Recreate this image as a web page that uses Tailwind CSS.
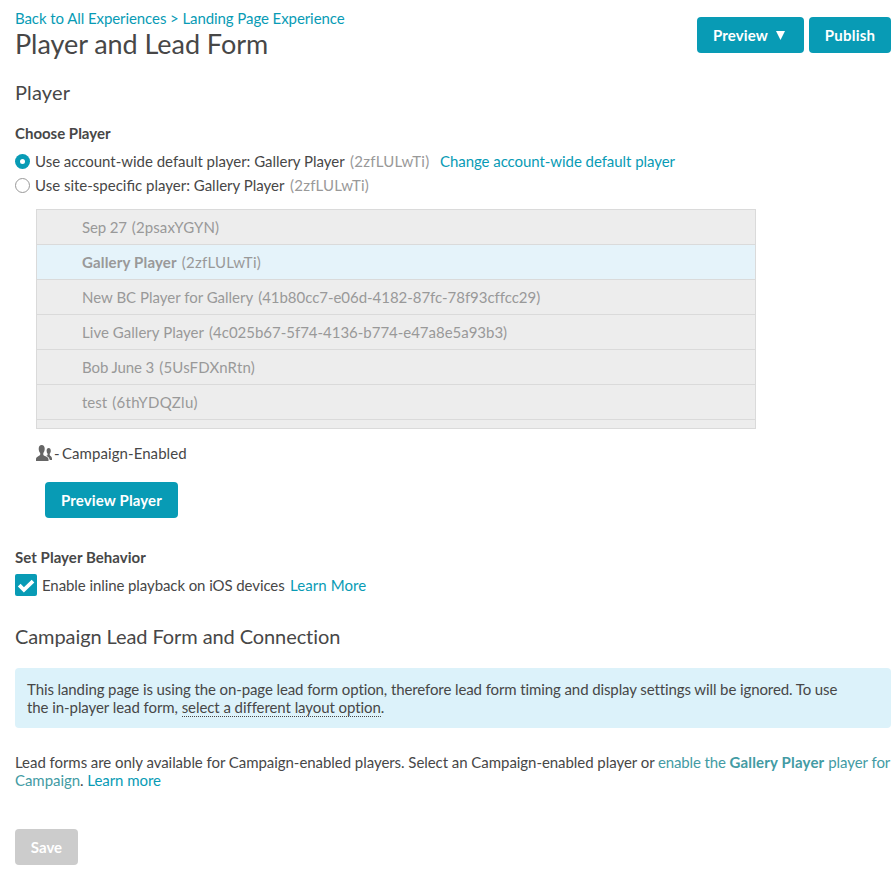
<!DOCTYPE html>
<html lang="en">
<head>
<meta charset="utf-8">
<title>Player and Lead Form</title>
<script src="https://cdn.jsdelivr.net/npm/@tailwindcss/browser@4"></script>
</head>
<body class="bg-white font-[Lato,sans-serif] text-[15px] leading-[18px] text-[#474747]">
<main class="flex flex-col items-start pl-[15px] pr-[5px]">
  <header class="flex w-full items-start justify-between">
    <div class="pt-[9px]">
      <nav class="tracking-[-0.08px] text-[#089bb5]"><a>Back to All Experiences</a> &gt; <a>Landing Page Experience</a></nav>
      <h1 class="mt-px text-[27px] leading-8 tracking-[-0.05px]">Player and Lead Form</h1>
    </div>
    <div class="flex gap-[5px] pt-[17px] font-bold text-white">
      <button class="flex h-9 w-[107px] items-center rounded bg-[#089bb5] pl-4 tracking-[0.13px]">Preview
        <svg class="ml-[8px] h-[9px] w-[9px]" viewBox="0 0 9 9" fill="currentColor"><path d="M0 0H9L4.5 9Z"/></svg>
      </button>
      <button class="h-9 w-[82px] rounded bg-[#089bb5] tracking-[0.25px]">Publish</button>
    </div>
  </header>

  <h2 class="mt-[20px] text-[20px] leading-6 tracking-[0.15px]">Player</h2>
  <h3 class="mt-[20px] font-bold">Choose Player</h3>
  <div class="mt-[7px] flex h-6 items-center">
    <span class="mr-[5px] flex size-[15px] items-center justify-center rounded-full bg-[#089bb5]"><span class="size-[5px] rounded-full bg-white"></span></span>
    <span class="w-[310px] whitespace-nowrap tracking-[-0.02px]">Use account-wide default player: Gallery Player</span>
    <span class="ml-[5px] w-[80px] tracking-[0.26px] text-[#999]">(2zfLULwTi)</span>
    <a class="ml-[10px] whitespace-nowrap tracking-[-0.06px] text-[#089bb5]">Change account-wide default player</a>
  </div>
  <div class="flex h-6 items-center">
    <span class="mr-[5px] size-[15px] rounded-full border border-[#999]"></span>
    <span class="w-[249px] whitespace-nowrap">Use site-specific player: Gallery Player</span>
    <span class="ml-[6px] tracking-[0.22px] text-[#999]">(2zfLULwTi)</span>
  </div>

  <ul class="ml-[21px] mt-[12px] h-[220px] w-[720px] overflow-hidden border border-[#dadada] bg-[#ededed] text-[#999] *:flex *:h-[35px] *:items-center *:gap-[5px] *:border-b *:border-[#dadada] *:pl-[45px]">
    <li><span class="tracking-[-0.15px]">Sep 27</span><span class="tracking-[0.12px]">(2psaxYGYN)</span></li>
    <li class="bg-[#e5f3fa]"><b class="tracking-[0.17px]">Gallery Player</b><span class="tracking-[0.24px]">(2zfLULwTi)</span></li>
    <li><span>New BC Player for Gallery</span><span class="tracking-[-0.04px]">(41b80cc7-e06d-4182-87fc-78f93cffcc29)</span></li>
    <li><span class="tracking-[0.04px]">Live Gallery Player</span><span class="tracking-[-0.02px]">(4c025b67-5f74-4136-b774-e47a8e5a93b3)</span></li>
    <li><span class="tracking-[-0.1px]">Bob June 3</span><span class="tracking-[0.18px]">(5UsFDXnRtn)</span></li>
    <li><span>test</span><span class="tracking-[0.32px]">(6thYDQZlu)</span></li>
  </ul>

  <div class="ml-[21px] mt-[15px] flex h-[18px] items-center">
    <svg class="mr-[2px] h-4 w-4" viewBox="0 0 16 16" fill="#666"><path d="M5.700 0C7.600 0 8.700 1.500 8.700 3.700c0 1.900-.6 3.300-1.400 4.300v1.800c.3 1.300 5.200 2 5.200 4.200V16H0v-2c0-2.300 3.700-3 4.200-4.200V8C3.300 7 2.700 5.600 2.700 3.700 2.700 1.500 3.800 0 5.700 0Z"/><path d="M12.700 3c1.300 0 2.100 1.100 2.100 2.800 0 1.300-.5 2.300-1.100 3v1.300c.2 1 2.300 1.500 2.300 3.300V15h-2.200c-.3-2.300-2-3.300-3.600-4.200.8-.2 1.300-.4 1.400-.8V8.800c-.6-.7-1-1.700-1-3 0-1.700.8-2.800 2.100-2.800Z"/></svg>
    <span class="w-[8px]">-</span><span class="whitespace-nowrap tracking-[0.07px]">Campaign-Enabled</span>
  </div>
  <button class="ml-[30px] mt-[20px] h-9 w-[133px] rounded bg-[#089bb5] font-bold tracking-[0.14px] text-white">Preview Player</button>

  <h3 class="mt-[30px] font-bold tracking-[0.05px]">Set Player Behavior</h3>
  <div class="mt-[8px] flex h-[22px] items-center">
    <span class="mr-[5px] flex size-[22px] items-center justify-center rounded-[2px] bg-[#089bb5]">
      <svg class="size-[22px]" viewBox="0 0 22 22" fill="none" stroke="#fff" stroke-width="3.800"><path d="M4.200 11.200L8.900 15.800L18 7.200"/></svg>
    </span>
    <span class="w-[243px] whitespace-nowrap tracking-[-0.085px]">Enable inline playback on iOS devices</span>
    <a class="ml-[5px] tracking-[0.09px] text-[#089bb5]">Learn More</a>
  </div>

  <h2 class="mt-[28px] text-[20px] leading-6 tracking-[-0.09px]">Campaign Lead Form and Connection</h2>
  <div class="mt-[20px] h-[60px] w-full rounded bg-[#dcf2fa] px-3 pt-[12px]">
    <p class="w-[830px] tracking-[-0.1px]">This landing page is using the on-page lead form option, therefore lead form timing and display settings will be ignored. To use<br><span class="tracking-[-0.07px]">the in-player lead form, <a class="border-b border-dotted border-[#474747]">select a different layout option</a>.</span></p>
  </div>
  <p class="mt-[25px] w-full whitespace-nowrap tracking-[-0.05px]">Lead forms are only available for Campaign-enabled players. Select an Campaign-enabled player or <a class="text-[#439ba4]"><span class="tracking-[-0.14px]">enable the </span><b class="tracking-[0.18px]">Gallery Player</b> player for<br>Campaign</a>. <a class="text-[#089bb5]">Learn more</a></p>
  <button class="mt-[40px] h-9 w-[63px] rounded bg-[#ccc] font-bold text-white">Save</button>
</main>
</body>
</html>
